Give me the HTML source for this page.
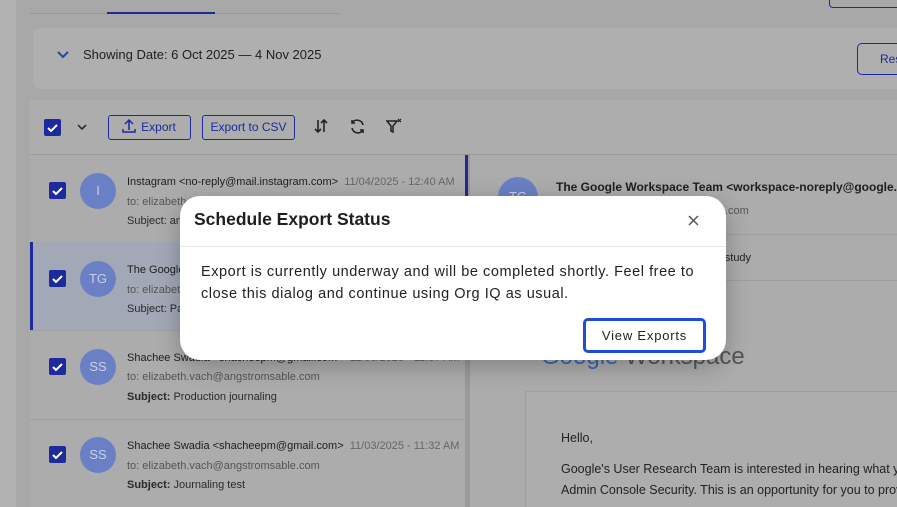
<!DOCTYPE html>
<html style="overflow:hidden"><head><meta charset="utf-8"><style>
*{margin:0;padding:0;box-sizing:border-box}
html,body{width:897px;height:507px;overflow:hidden}
body{background:#a8a8a8;font-family:"Liberation Sans",sans-serif;position:relative;color:#1e1e1e}
.a{position:absolute}
.card{background:#afafaf;border-radius:8px}
.cb{width:17px;height:17px;background:#1d2a9c;border-radius:2px}
.av{width:36px;height:36px;border-radius:50%;background:#6a80c4;color:#c8d0ea;font-size:13px;text-align:center;line-height:36px}
.nm{font-size:11px;color:#1e1e1e;white-space:nowrap}
.sm{font-size:11px;color:#555;white-space:nowrap}
.sub{font-size:11px;color:#2a2a2a;white-space:nowrap}
.btn{border:1.5px solid #1d2a9c;border-radius:3px;color:#1d2a9c;font-size:12px;text-align:center}
</style></head><body>
<div class="a" style="left:0;top:0;width:16px;height:507px;background:#b1b1b1"></div>
<div class="a" style="left:30px;top:13px;width:310px;height:1px;background:#999"></div>
<div class="a" style="left:107px;top:12px;width:108px;height:2px;background:#1d2a9c"></div>
<div class="a" style="left:829px;top:-4px;width:68px;height:12px;border:1.5px solid #1d2a9c;border-right:none;border-radius:4px 0 0 4px"></div>
<div class="a card" style="left:33px;top:28px;width:864px;height:61px;border-radius:8px 0 0 8px"></div>
<svg class="a" style="left:56px;top:50px" width="14" height="10"><path d="M2 2l5 5 5-5" stroke="#1d4f9c" stroke-width="2" fill="none"/></svg>
<div class="a" style="left:83px;top:47px;font-size:13px">Showing Date: 6 Oct 2025 — 4 Nov 2025</div>
<div class="a btn" style="left:857px;top:43px;width:40px;height:32px;line-height:30px;border-radius:5px 0 0 5px;border-right:none;text-align:left;padding-left:22px;overflow:hidden">Res</div>
<div class="a" style="left:30px;top:100px;width:867px;height:55px;background:#adadad"></div>
<div class="a" style="left:30px;top:154px;width:867px;height:1px;background:#999"></div>
<div class="a cb" style="left:44px;top:119px"></div>
<svg class="a" style="left:44px;top:119px" width="17" height="17"><path d="M4 9l3 3 6-6" stroke="#fff" stroke-width="2" fill="none"/></svg>
<svg class="a" style="left:76px;top:123px" width="12" height="8"><path d="M2 2l4 4 4-4" stroke="#222" stroke-width="1.5" fill="none"/></svg>
<div class="a btn" style="left:108px;top:115px;width:83px;height:25px;line-height:22px;padding-left:18px">Export</div>
<svg class="a" style="left:122px;top:118px" width="14" height="16"><path d="M7 12V2M3 6l4-4 4 4M1 11v3h12v-3" stroke="#1d2a9c" stroke-width="1.5" fill="none"/></svg>
<div class="a btn" style="left:202px;top:115px;width:93px;height:25px;line-height:22px">Export to CSV</div>
<svg class="a" style="left:313px;top:118px" width="16" height="16"><path d="M5 2v12M2 11l3 3 3-3M11 14V2M8 5l3-3 3 3" stroke="#222" stroke-width="1.6" fill="none"/></svg>
<svg class="a" style="left:349px;top:118px" width="17" height="17"><path d="M14 7A6 6 0 0 0 3 5M3 10a6 6 0 0 0 11 2M3 2v3h3M14 15v-3h-3" stroke="#222" stroke-width="1.6" fill="none"/></svg>
<svg class="a" style="left:386px;top:118px" width="17" height="17"><path d="M1 3h10l-4 5v6l-2-1V8z" stroke="#222" stroke-width="1.5" fill="none"/><path d="M12 1l3 3M15 1l-3 3" stroke="#222" stroke-width="1.2"/></svg>

<div class="a" style="left:30px;top:155px;width:435px;height:352px;background:#acacac"></div>
<div class="a" style="left:30px;top:242px;width:435px;height:88px;background:#a2a8b6"></div>
<div class="a" style="left:30px;top:242px;width:3px;height:88px;background:#1d2a9c"></div>
<div class="a" style="left:30px;top:330px;width:435px;height:1px;background:#9f9f9f"></div>
<div class="a" style="left:30px;top:419px;width:435px;height:1px;background:#9f9f9f"></div>
<div class="a" style="left:465px;top:155px;width:5px;height:352px;background:#9a9a9a"></div>
<div class="a" style="left:465px;top:155px;width:3px;height:88px;background:#1d2a9c"></div>

<div class="a cb" style="left:49px;top:182px"></div><svg class="a" style="left:49px;top:182px" width="17" height="17"><path d="M4 9l3 3 6-6" stroke="#fff" stroke-width="2" fill="none"/></svg>
<div class="a av" style="left:80px;top:173px">I</div>
<div class="a nm" style="left:127px;top:176px">Instagram &lt;no-reply@mail.instagram.com&gt; <span style="color:#666">&nbsp;11/04/2025 - 12:40 AM</span></div>
<div class="a sm" style="left:127px;top:196px">to: elizabeth</div>
<div class="a sub" style="left:127px;top:215px">Subject: an</div>

<div class="a cb" style="left:49px;top:270px"></div><svg class="a" style="left:49px;top:270px" width="17" height="17"><path d="M4 9l3 3 6-6" stroke="#fff" stroke-width="2" fill="none"/></svg>
<div class="a av" style="left:80px;top:261px">TG</div>
<div class="a nm" style="left:127px;top:264px">The Google</div>
<div class="a sm" style="left:127px;top:284px">to: elizabet</div>
<div class="a sub" style="left:127px;top:303px">Subject: Pa</div>

<div class="a cb" style="left:49px;top:358px"></div><svg class="a" style="left:49px;top:358px" width="17" height="17"><path d="M4 9l3 3 6-6" stroke="#fff" stroke-width="2" fill="none"/></svg>
<div class="a av" style="left:80px;top:349px">SS</div>
<div class="a nm" style="left:127px;top:352px">Shachee Swadia &lt;shacheepm@gmail.com&gt; <span style="color:#666">&nbsp;11/03/2025 - 11:57 AM</span></div>
<div class="a sm" style="left:127px;top:371px">to: elizabeth.vach@angstromsable.com</div>
<div class="a sub" style="left:127px;top:391px"><b>Subject:</b> Production journaling</div>

<div class="a cb" style="left:49px;top:446px"></div><svg class="a" style="left:49px;top:446px" width="17" height="17"><path d="M4 9l3 3 6-6" stroke="#fff" stroke-width="2" fill="none"/></svg>
<div class="a av" style="left:80px;top:437px">SS</div>
<div class="a nm" style="left:127px;top:440px">Shachee Swadia &lt;shacheepm@gmail.com&gt; <span style="color:#666">&nbsp;11/03/2025 - 11:32 AM</span></div>
<div class="a sm" style="left:127px;top:460px">to: elizabeth.vach@angstromsable.com</div>
<div class="a sub" style="left:127px;top:479px"><b>Subject:</b> Journaling test</div>

<div class="a" style="left:470px;top:155px;width:427px;height:352px;background:#acacac;overflow:hidden">
<div class="a av" style="left:28px;top:22px;width:40px;height:40px;line-height:40px">TG</div>
<div class="a nm" style="left:86px;top:25px;font-size:12px;font-weight:bold">The Google Workspace Team &lt;workspace-noreply@google.com&gt;</div>
<div class="a sm" style="left:86px;top:50px">to: elizabeth.vach@angstromsable.com</div>
<div class="a" style="left:20px;top:79px;width:407px;height:1px;background:#9f9f9f"></div>
<div class="a sm" style="left:86px;top:97px;color:#222">Subject: Google Admin study user study</div>
<div class="a" style="left:20px;top:125px;width:407px;height:1px;background:#9f9f9f"></div>
<div class="a" style="left:71px;top:188px;font-size:24px;color:#555;white-space:nowrap"><span style="color:#3b66b8">Google</span> Workspace</div>
<div class="a" style="left:55px;top:236px;width:380px;height:130px;border:1px solid #9f9f9f;background:#adadad"></div>
<div class="a" style="left:91px;top:276px;font-size:12.5px;color:#222">Hello,</div>
<div class="a" style="left:91px;top:307px;font-size:12.5px;color:#222;white-space:nowrap">Google's User Research Team is interested in hearing what you think</div>
<div class="a" style="left:91px;top:328px;font-size:12.5px;color:#222;white-space:nowrap">Admin Console Security. This is an opportunity for you to provide</div>
</div>

<div class="a" style="left:180px;top:196px;width:546px;height:164px;background:#fff;border-radius:20px;box-shadow:0 6px 24px rgba(0,0,0,.25)"></div>
<div class="a" style="left:194px;top:209px;font-size:17.5px;font-weight:bold;color:#1e1e1e">Schedule Export Status</div>
<svg class="a" style="left:688px;top:215px" width="11" height="11"><path d="M1 1l9 9M10 1l-9 9" stroke="#555" stroke-width="1.5"/></svg>
<div class="a" style="left:180px;top:246px;width:546px;height:1px;background:#e6e6e6"></div>
<div class="a" style="left:201px;top:261px;font-size:14.5px;line-height:22px;color:#222;letter-spacing:.55px;white-space:nowrap">Export is currently underway and will be completed shortly. Feel free to<br>close this dialog and continue using Org IQ as usual.</div>
<div class="a" style="left:583px;top:318px;width:123px;height:35px;border:3px solid #1f4fd0;border-radius:5px;font-size:13px;letter-spacing:.8px;text-align:center;line-height:29px;color:#222">View Exports</div>
</body></html>
